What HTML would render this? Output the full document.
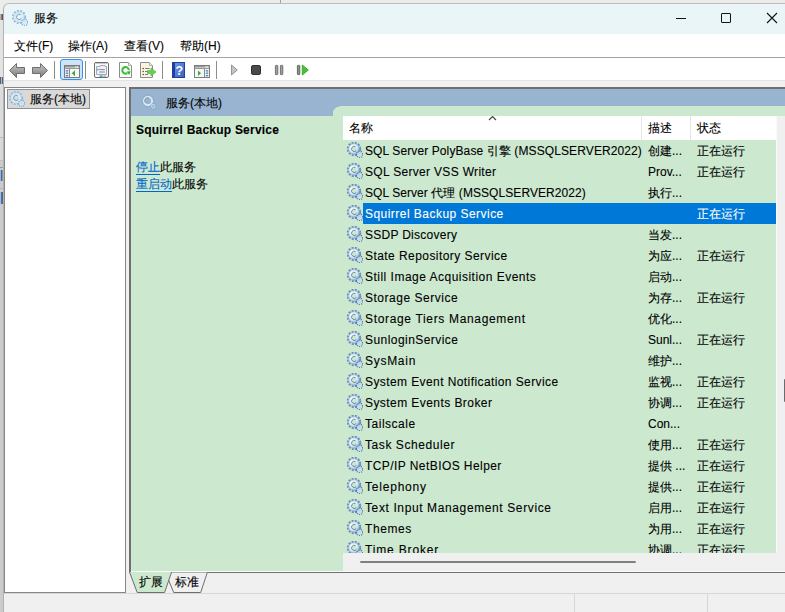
<!DOCTYPE html>
<html><head><meta charset="utf-8">
<style>
*{margin:0;padding:0;box-sizing:border-box}
html,body{width:785px;height:612px;overflow:hidden;background:#cbcbcb;font-family:"Liberation Sans",sans-serif;font-size:12px;color:#000}
.a{position:absolute}
.t{position:absolute;white-space:nowrap;line-height:14px;-webkit-text-stroke:0.1px currentColor}
#topline{left:0;top:0;width:785px;height:14px;background:#ececec}
#win{left:3px;top:3px;width:800px;height:620px;background:#f0f0f0;border-left:1px solid #b2b2b2;border-top:1px solid #bcbcbc;border-top-left-radius:6px;overflow:hidden}
#title{left:4px;top:4px;width:781px;height:30px;background:#eaf5f8;border-top-left-radius:6px}
#menu{left:4px;top:34px;width:781px;height:23px;background:#fff}
#menuline{left:4px;top:57px;width:781px;height:1px;background:#a3a3a3}
#tool{left:4px;top:58px;width:781px;height:22px;background:#fff}
#toolb{left:4px;top:80px;width:781px;height:1px;background:#e3e3e3}
.sep{position:absolute;top:61px;width:1px;height:18px;background:#8c8c8c}
#lpane{left:4px;top:87px;width:122px;height:506px;background:#fff;border:1px solid #82868f}
#item{left:7px;top:89px;width:83px;height:20px;background:#d9d9d9;border:1px solid #8f8f8f}
#rpane{left:129px;top:87px;width:660px;height:486px;border-left:2px solid #6f6f6f;border-top:2px solid #6f6f6f;background:#cce8cf}
#rhead{left:131px;top:89px;width:654px;height:27px;background:#99b4d1}
#tab{left:333px;top:106px;width:452px;height:20px;background:#cce8cf;clip-path:polygon(8px 0,100% 0,100% 100%,0 100%,0 5px,3px 1.5px)}
#list{left:343px;top:116px;width:433px;height:437px;overflow:hidden;background:#cce8cf}
#hdr{left:0;top:0;width:434px;height:24px;background:#fff}
.hs{position:absolute;top:0;width:1px;height:24px;background:#e5e5e5}
.row{position:absolute;left:0;width:433px;height:21px}
.row.sel{background:transparent}
.row.sel .selbg{}
.gi{position:absolute;left:4px;top:2px}
.nm{position:absolute;left:22px;top:4px;white-space:nowrap;line-height:14px;-webkit-text-stroke:0.1px currentColor}
.ds{position:absolute;left:305px;top:4px;white-space:nowrap;line-height:14px;-webkit-text-stroke:0.1px currentColor}
.st{position:absolute;left:354px;top:4px;white-space:nowrap;line-height:14px;-webkit-text-stroke:0.1px currentColor}
.sel .nm,.sel .ds,.sel .st{color:#fff}
#vsb{left:776px;top:116px;width:9px;height:437px;background:#f0f0f0;border-left:1px solid #fafafa}
#hsb{left:343px;top:553px;width:442px;height:18px;background:#f0f0f0}
#tabs{left:131px;top:571px;width:654px;height:22px;background:#f0f0f0}
#status{left:4px;top:593px;width:781px;height:19px;background:#f0f0f0;border-top:1px solid #d7d7d7}
.ssep{position:absolute;top:594px;width:1px;height:18px;background:#d7d7d7}

</style></head><body>
<svg width="0" height="0" style="position:absolute">
 <defs>
  <radialGradient id="gg" gradientUnits="userSpaceOnUse" cx="-1" cy="-1.2" r="7.5">
   <stop offset="0.3" stop-color="#f4fcff"/>
   <stop offset="0.62" stop-color="#c6e6f7"/>
   <stop offset="1" stop-color="#6f92c4"/>
  </radialGradient>
  <g id="gear">
   <g transform="translate(7,7)">
    <circle r="6.1" fill="none" stroke="#6d8cba" stroke-width="2.2" stroke-dasharray="2 1.2"/>
    <circle r="3.95" fill="none" stroke="url(#gg)" stroke-width="3"/>
    <circle r="5.3" fill="none" stroke="#8fafd6" stroke-width="0.5"/>
    <path d="M1.5 -2.3A2.6 2.6 0 1 0 2.4 1.2" fill="none" stroke="#65748e" stroke-width="0.9"/>
   </g>
   <g transform="translate(12.6,12.4)">
    <circle r="3.1" fill="none" stroke="#56749f" stroke-width="1.5" stroke-dasharray="1.1 1.1"/>
    <circle r="1.75" fill="none" stroke="#c0dcee" stroke-width="1.5"/>
   </g>
  </g>
  <g id="gearL">
   <g transform="translate(7,7)">
    <circle r="6.1" fill="none" stroke="#98b6d8" stroke-width="2" stroke-dasharray="1.8 1.45"/>
    <circle r="4" fill="none" stroke="#cdeefa" stroke-width="2.8"/>
    <circle r="5.4" fill="none" stroke="#a9c6e2" stroke-width="0.5"/>
    <path d="M1.5 -2.3A2.6 2.6 0 1 0 2.4 1.2" fill="none" stroke="#7c8aa2" stroke-width="0.9"/>
   </g>
   <g transform="translate(12.6,12.4)">
    <circle r="3.1" fill="none" stroke="#86a6cc" stroke-width="1.4" stroke-dasharray="1.1 1.1"/>
    <circle r="1.75" fill="none" stroke="#cde6f4" stroke-width="1.4"/>
   </g>
  </g>
 </defs>
</svg>
<div class="a" id="topline"></div>
<div class="a" style="left:0;top:14px;width:3px;height:6px;background:linear-gradient(90deg,#3aa0e0 0,#f0e080 33%,#701030 66%,#5080c0 100%)"></div>
<div class="a" style="left:0;top:20px;width:3px;height:57px;background:#e3e3e3"></div>
<div class="a" style="left:0;top:77px;width:3px;height:7px;background:linear-gradient(90deg,#303040,#c0d8f0 60%,#101020)"></div>
<div class="a" style="left:0;top:84px;width:3px;height:53px;background:#dcdcdc"></div>
<div class="a" style="left:0;top:137px;width:3px;height:1px;background:#bcbcbc"></div>
<div class="a" style="left:0;top:138px;width:3px;height:22px;background:#d8d8d8"></div>
<div class="a" style="left:0;top:160px;width:3px;height:1px;background:#c0c0c0"></div>
<div class="a" style="left:0;top:167px;width:3px;height:1px;background:#9a9a9a"></div>
<div class="a" style="left:0;top:170px;width:3px;height:11px;background:linear-gradient(90deg,#c8d8e8,#3070c0 50%,#e0a040)"></div>
<div class="a" style="left:0;top:188px;width:3px;height:1px;background:#b8b8b8"></div>
<div class="a" style="left:0;top:192px;width:3px;height:12px;background:linear-gradient(90deg,#d0e0f0,#2060b0 60%,#a06020)"></div>

<div class="a" style="left:280px;top:0;width:1px;height:3px;background:#a0a0a0"></div>
<div class="a" id="win"></div>
<div class="a" id="title"></div>
<svg class="a" style="left:12px;top:10px" width="16" height="16"><use href="#gearL"/></svg>
<div class="t" style="left:34px;top:11px;font-size:12px">服务</div>
<div class="a" style="left:676px;top:18px;width:10px;height:1px;background:#111"></div>
<div class="a" style="left:721px;top:13px;width:10px;height:10px;border:1px solid #111;border-radius:1px"></div>
<svg class="a" style="left:766px;top:12px" width="12" height="12"><path d="M1 1L11 11M11 1L1 11" stroke="#111" stroke-width="1.1"/></svg>

<div class="a" id="menu"></div>
<div class="t" style="left:14px;top:39px">文件(F)</div>
<div class="t" style="left:68px;top:39px">操作(A)</div>
<div class="t" style="left:124px;top:39px">查看(V)</div>
<div class="t" style="left:180px;top:39px">帮助(H)</div>
<div class="a" id="menuline"></div>
<div class="a" id="tool"></div>
<div class="a" id="toolb"></div>
<!-- toolbar icons -->
<svg class="a" style="left:9px;top:63px" width="40" height="16">
 <defs><linearGradient id="ag" x1="0" y1="0" x2="0" y2="1"><stop offset="0" stop-color="#c8c8c8"/><stop offset="1" stop-color="#7a7a7a"/></linearGradient></defs>
 <path d="M0.5 7.5L7.5 0.5V4.5H15.5V10.5H7.5V14.5Z" fill="url(#ag)" stroke="#6e6e6e"/>
 <path d="M38.5 7.5L31.5 0.5V4.5H23.5V10.5H31.5V14.5Z" fill="url(#ag)" stroke="#6e6e6e"/>
</svg>
<div class="sep" style="left:54px"></div>
<div class="a" style="left:60px;top:59px;width:23px;height:21px;background:#cce4f7;border:1px solid #3d8ee8;border-radius:3px"></div>
<svg class="a" style="left:64px;top:65px" width="16" height="13">
 <rect x="0.5" y="0.5" width="15" height="12" fill="#f6f6f6" stroke="#7c7c7c"/>
 <rect x="1" y="1" width="10.5" height="1.6" fill="#9a9a9a"/>
 <rect x="12.2" y="1.2" width="1.2" height="1.2" fill="#9a9a9a"/><rect x="13.9" y="1.2" width="1.2" height="1.2" fill="#9a9a9a"/>
 <line x1="1" y1="3.5" x2="15" y2="3.5" stroke="#9a9a9a"/>
 <rect x="1" y="4" width="4" height="8" fill="#eeeeee"/>
 <rect x="1.8" y="5.2" width="2.4" height="1.3" fill="#4a7fc0"/><rect x="1.8" y="7.6" width="2.4" height="1.3" fill="#4a7fc0"/><rect x="1.8" y="10" width="2.4" height="1.3" fill="#4a7fc0"/>
 <line x1="5.5" y1="4" x2="5.5" y2="12" stroke="#8a8a8a"/>
 <path d="M11 5.2L7.8 8.2L11 11.2Z" fill="#3aaa35"/>
</svg>
<div class="sep" style="left:85px"></div>
<svg class="a" style="left:94px;top:62px" width="15" height="16">
 <rect x="0.5" y="0.5" width="14" height="15" rx="1.5" fill="#fdfdfd" stroke="#6c6c6c"/>
 <line x1="1.5" y1="1.6" x2="13" y2="1.6" stroke="#c4c4c4"/>
 <path d="M2.5 4.5H6V3.5H11V4.5H12.5V12.5H2.5Z" fill="#eef0f6" stroke="#a4a8bc"/>
 <circle cx="3.9" cy="7.6" r="0.8" fill="#1a9ff0"/>
 <line x1="5.3" y1="7.6" x2="10.8" y2="7.6" stroke="#8a8a8a"/>
 <line x1="5.3" y1="10" x2="10.8" y2="10" stroke="#8a8a8a"/>
 <rect x="5.5" y="13.3" width="3.2" height="1.7" fill="#2fb4f2"/>
 <rect x="9.2" y="13.3" width="3" height="1.7" fill="#b8b8b8"/>
</svg>
<svg class="a" style="left:119px;top:62px" width="14" height="16">
 <path d="M0.5 0.5H9.5L12.5 3.5V15.5H0.5Z" fill="#fdfdfd" stroke="#8c8c8c"/>
 <path d="M9.5 0.5V3.5H12.5" fill="#eeeeee" stroke="#b0b0b0"/>
 <path d="M8.4 11.1A3.3 3.3 0 1 1 9.9 8.2" fill="none" stroke="#3cc23c" stroke-width="2.1"/>
 <path d="M7.6 9.6L11.6 9.2L10.2 13Z" fill="#2fae2f"/>
</svg>
<svg class="a" style="left:140px;top:62px" width="17" height="16">
 <path d="M0.5 0.5H9.5L12.5 3.5V15.5H0.5Z" fill="#fbf4d6" stroke="#8c8c8c"/>
 <path d="M9.5 0.5V3.5H12.5" fill="#eeeeee" stroke="#b0b0b0"/>
 <rect x="2.6" y="5.9" width="1.2" height="1.2" fill="#333"/><rect x="2.6" y="8.9" width="1.2" height="1.2" fill="#333"/><rect x="2.6" y="11.9" width="1.2" height="1.2" fill="#333"/>
 <line x1="5" y1="6.5" x2="9.5" y2="6.5" stroke="#7a74b0"/><line x1="5" y1="9.5" x2="8" y2="9.5" stroke="#7a74b0"/><line x1="5" y1="12.5" x2="8" y2="12.5" stroke="#7a74b0"/>
 <path d="M7.5 8.6H11V6L16 10L11 14V11.4H7.5Z" fill="#66d05a" stroke="#3fae35" stroke-width="0.6"/>
</svg>
<div class="sep" style="left:162px"></div>
<svg class="a" style="left:172px;top:62px" width="13" height="16">
 <defs><linearGradient id="hg" x1="0" y1="0" x2="1" y2="1"><stop offset="0" stop-color="#6a94e4"/><stop offset="1" stop-color="#3a62c4"/></linearGradient></defs>
 <rect x="0" y="0" width="13" height="16" fill="#1f3f9e"/>
 <rect x="3" y="1" width="9" height="14" fill="url(#hg)"/>
 <text x="7.4" y="12.6" font-family="Liberation Sans" font-size="12.5" font-weight="bold" fill="#fff" text-anchor="middle">?</text>
</svg>
<svg class="a" style="left:194px;top:65px" width="16" height="13">
 <rect x="0.5" y="0.5" width="15" height="12" fill="#f6f6f6" stroke="#7c7c7c"/>
 <rect x="1" y="1" width="10.5" height="1.6" fill="#9a9a9a"/>
 <rect x="12.2" y="1.2" width="1.2" height="1.2" fill="#9a9a9a"/><rect x="13.9" y="1.2" width="1.2" height="1.2" fill="#9a9a9a"/>
 <line x1="1" y1="3.5" x2="15" y2="3.5" stroke="#9a9a9a"/>
 <path d="M4 5.5L7 8.2L4 11Z" fill="#3aaa35"/>
 <line x1="10.5" y1="4" x2="10.5" y2="12" stroke="#8a8a8a"/>
 <rect x="11.8" y="5.2" width="2.4" height="1.3" fill="#4a7fc0"/><rect x="11.8" y="7.6" width="2.4" height="1.3" fill="#4a7fc0"/><rect x="11.8" y="10" width="2.4" height="1.3" fill="#4a7fc0"/>
</svg>
<div class="sep" style="left:216px"></div>
<svg class="a" style="left:230px;top:64px" width="80" height="12">
 <path d="M1.5 1L7.3 6L1.5 11Z" fill="#c4c4c4" stroke="#8c8c8c" stroke-width="0.9"/>
 <rect x="21.5" y="1.5" width="9" height="9" rx="1.5" fill="#4a4a4a" stroke="#333"/>
 <rect x="45.4" y="1.4" width="2.4" height="9.2" rx="0.5" fill="#a0a0a0" stroke="#5c5c5c" stroke-width="0.8"/>
 <rect x="50.4" y="1.4" width="2.4" height="9.2" rx="0.5" fill="#a0a0a0" stroke="#5c5c5c" stroke-width="0.8"/>
 <rect x="67.4" y="1.4" width="2.4" height="9.2" rx="0.5" fill="#909090" stroke="#505050" stroke-width="0.8"/>
 <path d="M72.3 1L78.3 6L72.3 11Z" fill="#44c535" stroke="#2a9a20" stroke-width="0.8"/>
</svg>

<!-- left pane -->
<div class="a" id="lpane"></div>
<div class="a" id="item"></div>
<svg class="a" style="left:9px;top:91px" width="16" height="16"><use href="#gearL"/></svg>
<div class="t" style="left:30px;top:92px">服务(本地)</div>

<!-- right pane -->
<div class="a" id="rpane"></div>
<div class="a" id="rhead"></div>
<svg class="a" style="left:141px;top:94px" width="18" height="18">
 <g transform="translate(7,7)">
  <circle r="6.1" fill="none" stroke="#7d93b4" stroke-width="1" stroke-dasharray="1 2.2" opacity="0.8"/>
  <circle r="4.1" fill="none" stroke="#d6f2fc" stroke-width="1.8"/>
  <path d="M-2.9 1.6A3.2 3.2 0 0 1 1 -3.1" fill="none" stroke="#8a8090" stroke-width="0.8"/>
 </g>
 <g transform="translate(12.3,12.3)">
  <circle r="2.9" fill="none" stroke="#7d93b4" stroke-width="0.9" stroke-dasharray="0.8 1.3"/>
  <circle r="1.8" fill="none" stroke="#c8e6f4" stroke-width="0.9"/>
 </g>
</svg>
<div class="t" style="left:166px;top:96px">服务(本地)</div>
<div class="a" id="tab"></div>
<div class="t" style="left:136px;top:123px;font-weight:bold;letter-spacing:0.22px">Squirrel Backup Service</div>
<div class="t" style="left:136px;top:160px"><span style="color:#0066cc;text-decoration:underline;text-underline-offset:3px">停止</span>此服务</div>
<div class="t" style="left:136px;top:177px"><span style="color:#0066cc;text-decoration:underline;text-underline-offset:3px">重启动</span>此服务</div>

<div class="a" id="list">
 <div class="a" id="hdr"></div>
 <div class="t" style="left:6px;top:5px">名称</div>
 <svg class="a" style="left:145px;top:0px" width="10" height="6"><path d="M1 4L4.5 0.5L8 4" fill="none" stroke="#444" stroke-width="1.1"/></svg>
 <div class="hs" style="left:298px"></div>
 <div class="t" style="left:305px;top:5px">描述</div>
 <div class="hs" style="left:347px"></div>
 <div class="t" style="left:354px;top:5px">状态</div>
 <div class="a" style="left:20px;top:87px;width:413px;height:21px;background:#0078d7"></div>
<div class="row" style="top:24px"><svg class="gi" width="16" height="16"><use href="#gear"/></svg><div class="nm" style="letter-spacing:0.105px">SQL Server PolyBase 引擎 (MSSQLSERVER2022)</div><div class="ds">创建...</div><div class="st">正在运行</div></div>
<div class="row" style="top:45px"><svg class="gi" width="16" height="16"><use href="#gear"/></svg><div class="nm" style="letter-spacing:0.315px">SQL Server VSS Writer</div><div class="ds">Prov...</div><div class="st">正在运行</div></div>
<div class="row" style="top:66px"><svg class="gi" width="16" height="16"><use href="#gear"/></svg><div class="nm" style="letter-spacing:0.067px">SQL Server 代理 (MSSQLSERVER2022)</div><div class="ds">执行...</div><div class="st"></div></div>
<div class="row sel" style="top:87px"><svg class="gi" width="16" height="16"><use href="#gear"/></svg><div class="nm" style="letter-spacing:0.464px">Squirrel Backup Service</div><div class="ds"></div><div class="st">正在运行</div></div>
<div class="row" style="top:108px"><svg class="gi" width="16" height="16"><use href="#gear"/></svg><div class="nm" style="letter-spacing:0.277px">SSDP Discovery</div><div class="ds">当发...</div><div class="st"></div></div>
<div class="row" style="top:129px"><svg class="gi" width="16" height="16"><use href="#gear"/></svg><div class="nm" style="letter-spacing:0.439px">State Repository Service</div><div class="ds">为应...</div><div class="st">正在运行</div></div>
<div class="row" style="top:150px"><svg class="gi" width="16" height="16"><use href="#gear"/></svg><div class="nm" style="letter-spacing:0.486px">Still Image Acquisition Events</div><div class="ds">启动...</div><div class="st"></div></div>
<div class="row" style="top:171px"><svg class="gi" width="16" height="16"><use href="#gear"/></svg><div class="nm" style="letter-spacing:0.514px">Storage Service</div><div class="ds">为存...</div><div class="st">正在运行</div></div>
<div class="row" style="top:192px"><svg class="gi" width="16" height="16"><use href="#gear"/></svg><div class="nm" style="letter-spacing:0.665px">Storage Tiers Management</div><div class="ds">优化...</div><div class="st"></div></div>
<div class="row" style="top:213px"><svg class="gi" width="16" height="16"><use href="#gear"/></svg><div class="nm" style="letter-spacing:0.443px">SunloginService</div><div class="ds">Sunl...</div><div class="st">正在运行</div></div>
<div class="row" style="top:234px"><svg class="gi" width="16" height="16"><use href="#gear"/></svg><div class="nm" style="letter-spacing:0.717px">SysMain</div><div class="ds">维护...</div><div class="st"></div></div>
<div class="row" style="top:255px"><svg class="gi" width="16" height="16"><use href="#gear"/></svg><div class="nm" style="letter-spacing:0.409px">System Event Notification Service</div><div class="ds">监视...</div><div class="st">正在运行</div></div>
<div class="row" style="top:276px"><svg class="gi" width="16" height="16"><use href="#gear"/></svg><div class="nm" style="letter-spacing:0.432px">System Events Broker</div><div class="ds">协调...</div><div class="st">正在运行</div></div>
<div class="row" style="top:297px"><svg class="gi" width="16" height="16"><use href="#gear"/></svg><div class="nm" style="letter-spacing:0.513px">Tailscale</div><div class="ds">Con...</div><div class="st"></div></div>
<div class="row" style="top:318px"><svg class="gi" width="16" height="16"><use href="#gear"/></svg><div class="nm" style="letter-spacing:0.569px">Task Scheduler</div><div class="ds">使用...</div><div class="st">正在运行</div></div>
<div class="row" style="top:339px"><svg class="gi" width="16" height="16"><use href="#gear"/></svg><div class="nm" style="letter-spacing:0.425px">TCP/IP NetBIOS Helper</div><div class="ds">提供 ...</div><div class="st">正在运行</div></div>
<div class="row" style="top:360px"><svg class="gi" width="16" height="16"><use href="#gear"/></svg><div class="nm" style="letter-spacing:0.788px">Telephony</div><div class="ds">提供...</div><div class="st">正在运行</div></div>
<div class="row" style="top:381px"><svg class="gi" width="16" height="16"><use href="#gear"/></svg><div class="nm" style="letter-spacing:0.614px">Text Input Management Service</div><div class="ds">启用...</div><div class="st">正在运行</div></div>
<div class="row" style="top:402px"><svg class="gi" width="16" height="16"><use href="#gear"/></svg><div class="nm" style="letter-spacing:0.58px">Themes</div><div class="ds">为用...</div><div class="st">正在运行</div></div>
<div class="row" style="top:423px"><svg class="gi" width="16" height="16"><use href="#gear"/></svg><div class="nm" style="letter-spacing:0.84px">Time Broker</div><div class="ds">协调...</div><div class="st">正在运行</div></div>
</div>
<div class="a" id="vsb"></div>
<div class="a" style="left:784px;top:379px;width:2px;height:23px;background:#6b6b6b;border-radius:1px"></div>
<div class="a" id="hsb"></div>
<div class="a" style="left:360px;top:561px;width:276px;height:2px;background:#808080;border-radius:1px"></div>
<div class="a" id="tabs"></div>
<div class="a" style="left:131px;top:571px;width:654px;height:1px;background:#fbfbfb"></div>
<div class="a" style="left:165px;top:572px;width:620px;height:1px;background:#707070"></div>
<svg class="a" style="left:125px;top:565px" width="90" height="30">
 <path d="M40.5 7.5L48.7 27.5H75.7L82.3 7.5" fill="#f0f0f0" stroke="#6e6e6e" stroke-width="1"/>
 <path d="M4 7L12 27.5H39.6L46.4 7Z" fill="#cce8cf"/>
 <path d="M4.5 7L12.2 27.5H39.6L46.6 7" fill="none" stroke="#6e6e6e" stroke-width="1"/>
</svg>
<div class="t" style="left:139px;top:575px">扩展</div>
<div class="t" style="left:175px;top:575px">标准</div>
<div class="a" id="status"></div>
<div class="ssep" style="left:574px"></div>
<div class="ssep" style="left:707px"></div>

</body></html>
